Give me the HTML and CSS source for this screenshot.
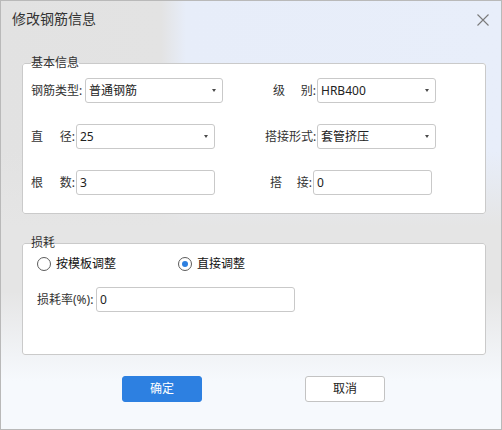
FILE: index.html
```html
<!DOCTYPE html>
<html lang="zh-CN">
<head>
    <meta charset="UTF-8">
    <meta name="viewport" content="width=device-width, initial-scale=1.0">
    <title>修改钢筋信息</title>
    <link rel="stylesheet" href="styles.css">
</head>
<body>
    <div class="dialog">
        <!-- Title bar -->
        <div class="dialog-header">
            <span class="dialog-title">修改钢筋信息</span>
            <span class="close-btn">
                <svg width="12" height="12" viewBox="0 0 12 12">
                    <path d="M0.5 0.5 L11.5 11.5 M11.5 0.5 L0.5 11.5" stroke="#7a7a7a" stroke-width="1.1" fill="none"/>
                </svg>
            </span>
        </div>

        <!-- Basic info -->
        <fieldset class="group group-basic">
            <legend>基本信息</legend>
            <div class="form-row">
                <div class="field field-left">
                    <label class="label label-type">钢筋类型:</label>
                    <div class="select select-left-wide">普通钢筋<span class="caret"></span></div>
                </div>
                <div class="field field-right indent-grade">
                    <label class="label spread label-grade"><span>级</span><span>别:</span></label>
                    <div class="select select-right">HRB400<span class="caret"></span></div>
                </div>
            </div>
            <div class="form-row">
                <div class="field field-left">
                    <label class="label spread label-short"><span>直</span><span>径:</span></label>
                    <div class="select select-left">25<span class="caret"></span></div>
                </div>
                <div class="field field-right">
                    <label class="label label-lap">搭接形式:</label>
                    <div class="select select-right">套管挤压<span class="caret"></span></div>
                </div>
            </div>
            <div class="form-row">
                <div class="field field-left">
                    <label class="label spread label-short"><span>根</span><span>数:</span></label>
                    <div class="input input-left">3</div>
                </div>
                <div class="field field-right indent-joint">
                    <label class="label spread label-joint"><span>搭</span><span>接:</span></label>
                    <div class="input input-right">0</div>
                </div>
            </div>
        </fieldset>

        <!-- Loss -->
        <fieldset class="group group-loss">
            <legend>损耗</legend>
            <div class="loss-body">
                <div class="radio-row">
                    <label class="radio radio-first"><span class="radio-dot"></span>按模板调整</label>
                    <label class="radio checked"><span class="radio-dot"></span>直接调整</label>
                </div>
                <div class="loss-row">
                    <label class="label label-loss">损耗率(%):</label>
                    <div class="input input-loss">0</div>
                </div>
            </div>
        </fieldset>

        <div class="dialog-footer">
            <button class="btn btn-primary">确定</button>
            <button class="btn btn-default">取消</button>
        </div>
    </div>
</body>
</html>
```

FILE: styles.css
```css
* {
    box-sizing: border-box;
}

body {
    margin: 0;
    font-family: "Noto Sans", "Noto Sans CJK SC", sans-serif;
    font-size: 12px;
    color: #333;
}

.dialog {
    width: 502px;
    height: 430px;
    border: 1px solid #b9b9b9;
    background:
        linear-gradient(180deg, rgba(246, 249, 253, 0) 0, rgba(246, 249, 253, 0) 290px, rgba(246, 249, 253, 1) 380px),
        linear-gradient(180deg, rgba(229, 229, 229, 0) 0, rgba(229, 229, 229, 0) 150px, rgba(229, 229, 229, 1) 225px),
        linear-gradient(90deg, #e2e2e2 0, #e3e3e3 160px, #e7edf9 185px, #e8eefa 100%);
}

.dialog-header {
    height: 36px;
    display: flex;
    align-items: center;
    justify-content: space-between;
    padding: 0 12px 0 11px;
}

.dialog-title {
    font-size: 14px;
    line-height: 16px;
    color: #333;
}

.close-btn {
    display: flex;
    width: 12px;
    height: 12px;
    margin-top: 2px;
}

/* Group boxes */
.group {
    margin: 0 15px 0 21px;
    border: 1px solid #cacaca;
    border-radius: 3px;
    background: #fff;
    min-width: 0;
}

.group legend {
    padding: 0;
    font-size: 12px;
    line-height: 14px;
    color: #333;
}

.group-basic {
    margin-top: 19px;
    padding: 8px 8px 18px;
}

.group-loss {
    margin-top: 22px;
    padding: 7px 8px 42px;
}

.form-row {
    display: flex;
    height: 25px;
    margin-bottom: 21px;
}

.form-row:last-child {
    margin-bottom: 0;
}

.field {
    display: flex;
    align-items: center;
}

.field-left {
    width: 234px;
}

.indent-grade {
    padding-left: 8px;
}

.indent-joint {
    padding-left: 5px;
}

.label {
    flex-shrink: 0;
    white-space: nowrap;
    line-height: 14px;
    color: #333;
}

/* two-character labels: first char left, second char plus colon right */
.spread {
    display: flex;
    justify-content: space-between;
}

.label-type { width: 53px; }
.label-short { width: 44px; }
.label-grade { width: 43px; }
.label-lap { width: 51px; }
.label-joint { width: 42px; }
.label-loss { width: 58px; }

/* Combo boxes and text boxes */
.select,
.input {
    display: flex;
    align-items: center;
    height: 25px;
    margin-left: 1px;
    padding: 0 0 0 3px;
    border: 1px solid #c9c9c9;
    border-radius: 3px;
    background: #fff;
    font-size: 12px;
    line-height: 14px;
    color: #222;
}

.select-left-wide { width: 138px; }
.select-left { width: 139px; }
.select-right { width: 119px; }
.input-left { width: 139px; }
.input-right { width: 119px; }
.input-loss { width: 199px; }

.caret {
    margin-left: auto;
    margin-right: 6px;
    width: 0;
    height: 0;
    border-top: 3px solid #4a4a4a;
    border-left: 2.5px solid transparent;
    border-right: 2.5px solid transparent;
}

/* Loss group */
.loss-body {
    padding-left: 6px;
}

.radio-row {
    display: flex;
    align-items: center;
    height: 14px;
}

.radio {
    display: flex;
    align-items: center;
    line-height: 14px;
    color: #111;
}

.radio-first {
    width: 141px;
}

.radio-dot {
    position: relative;
    width: 14px;
    height: 14px;
    margin-right: 5px;
    border: 1px solid #5c5c5c;
    border-radius: 50%;
    background: #fff;
}

.checked .radio-dot::after {
    content: "";
    position: absolute;
    top: 3px;
    left: 3px;
    width: 6px;
    height: 6px;
    border-radius: 50%;
    background: #2d7fe0;
}

.loss-row {
    display: flex;
    align-items: center;
    margin-top: 16px;
}

/* Footer buttons */
.dialog-footer {
    display: flex;
    gap: 103px;
    margin-top: 21px;
    padding-left: 121px;
}

.btn {
    width: 80px;
    height: 26px;
    padding: 0;
    border-radius: 3px;
    font-family: "Noto Sans", "Noto Sans CJK SC", sans-serif;
    font-size: 12px;
    line-height: 14px;
    cursor: pointer;
}

.btn-primary {
    border: 1px solid #2d80e1;
    background: #2d80e1;
    color: #fff;
}

.btn-default {
    border: 1px solid #c3c3c3;
    background: #fff;
    color: #222;
}
```
